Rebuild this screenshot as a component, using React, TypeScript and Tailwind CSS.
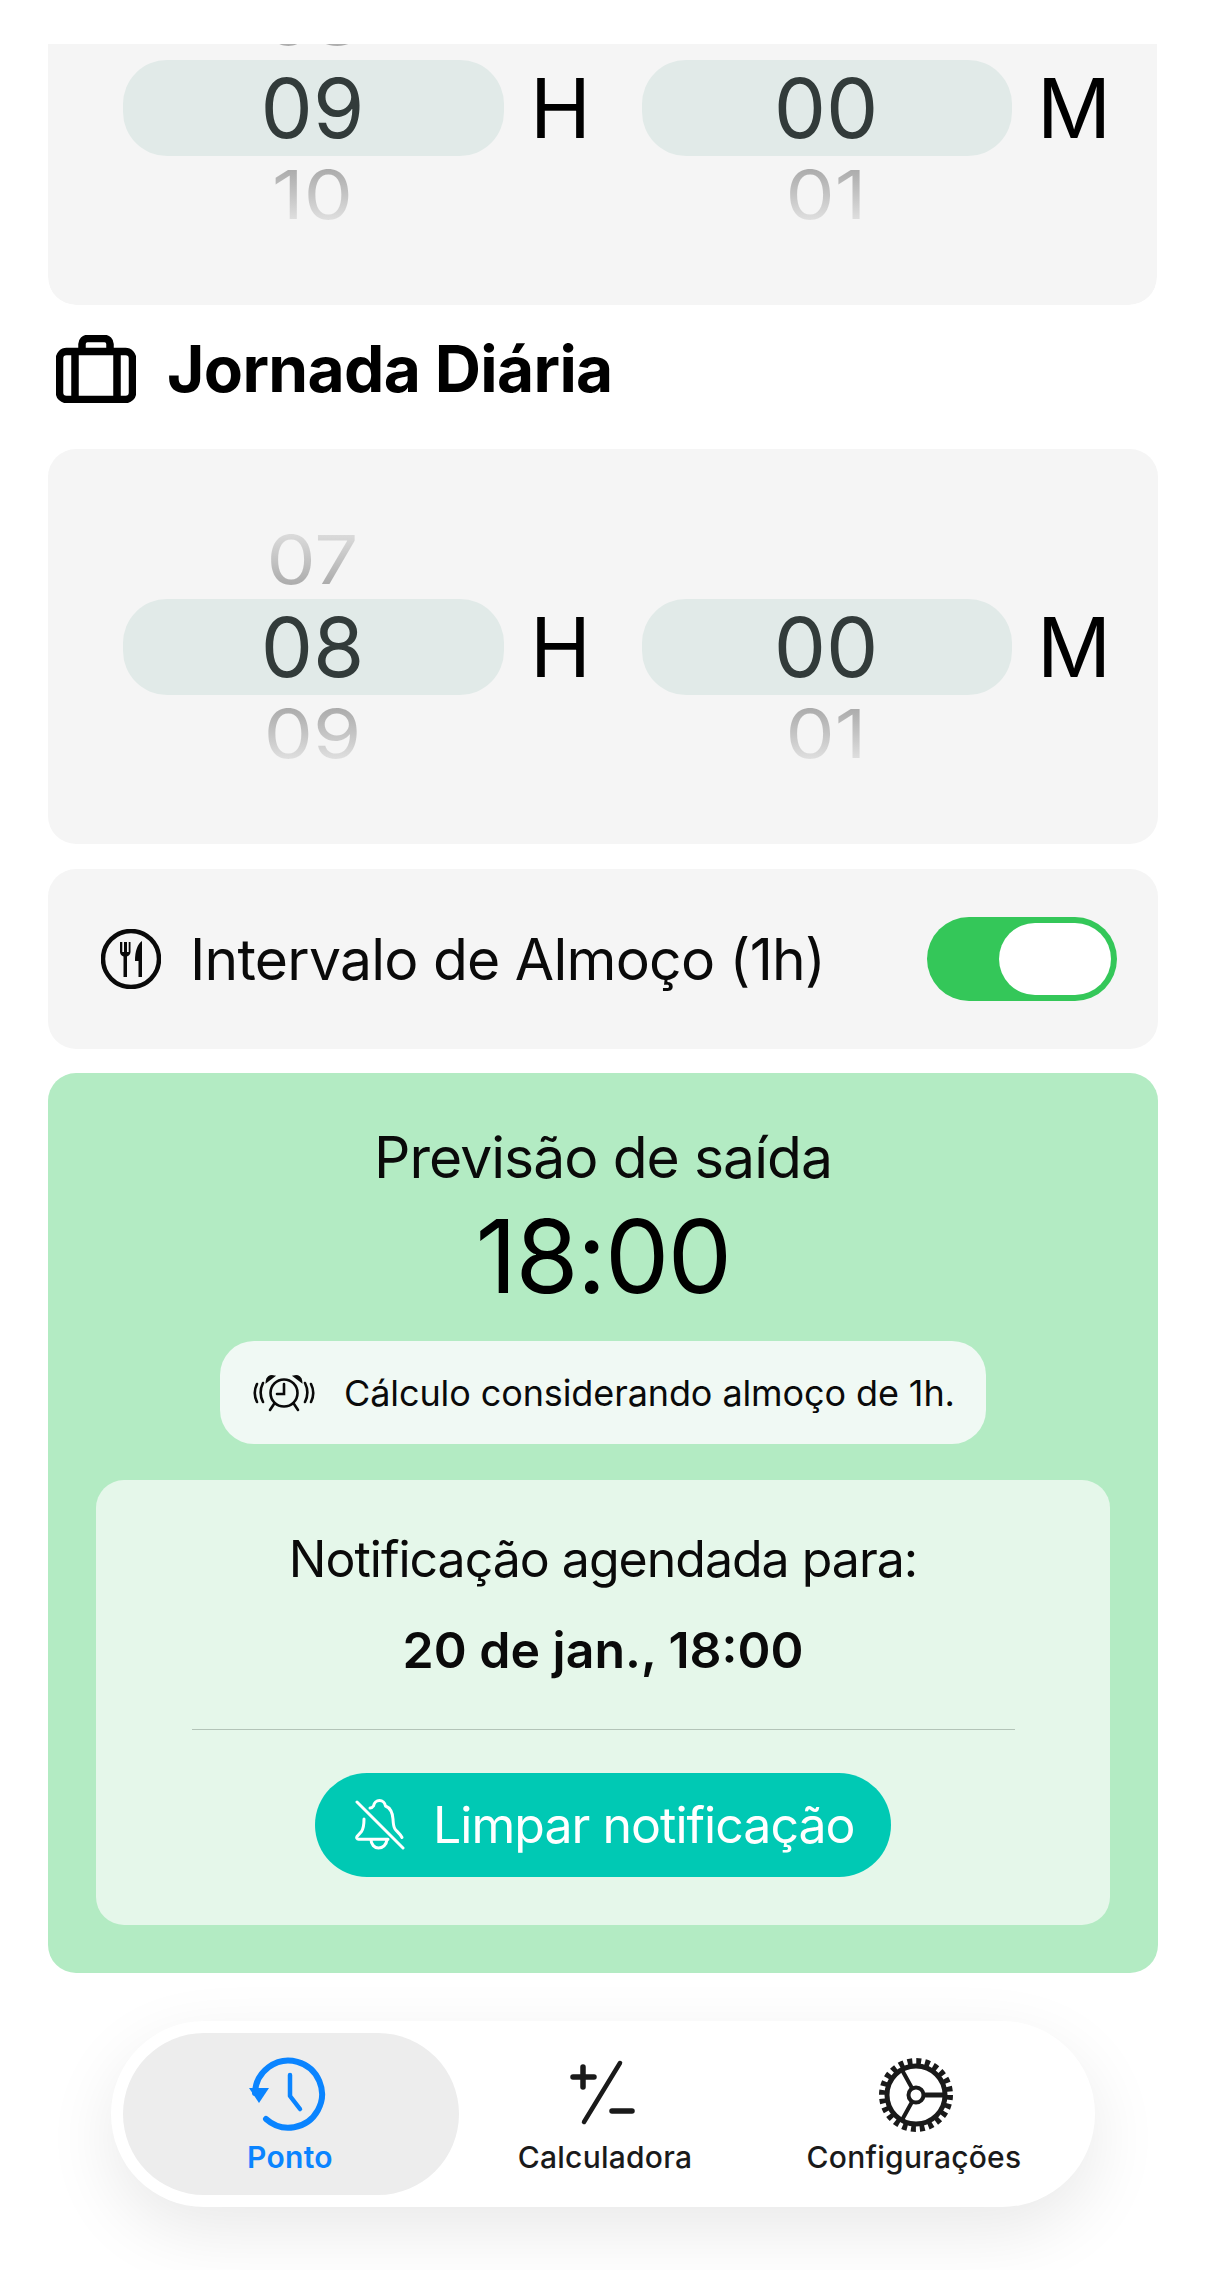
const font = { fontFamily: '"Inter", "Liberation Sans", sans-serif' };

function Wheel({ width, prev, value, next }: { width: string; prev?: string; value: string; next: string }) {
  return (
    <div className={`relative h-[261px] shrink-0 ${width}`}>
      <div className="absolute inset-x-0 top-[83px] h-[96px] rounded-[44px] bg-[#e1eae8]" />
      <div className="relative flex h-full flex-col items-center pr-[2px]">
        <div className="flex h-[87px] scale-y-[0.86] items-center bg-gradient-to-b from-[#e6e6e6] via-[#c4c4c4] to-[#a0a0a0] bg-clip-text text-[78px] leading-none text-transparent">{prev}</div>
        <div className="flex h-[87px] items-center pt-[2px] text-[83px] leading-none text-[#323b3a]">{value}</div>
        <div className="flex h-[87px] scale-y-[0.86] items-center bg-gradient-to-b from-[#a0a0a0] via-[#c4c4c4] to-[#ececec] bg-clip-text text-[78px] leading-none text-transparent">{next}</div>
      </div>
    </div>
  );
}

function PickerRow({ hourPrev, hour, hourNext }: { hourPrev: string; hour: string; hourNext: string }) {
  return (
    <div className="flex h-[395px] items-center rounded-[28px] bg-[#f5f5f5] pl-[75px]">
      <Wheel width="w-[381px]" prev={hourPrev} value={hour} next={hourNext} />
      <div className="w-[138px] shrink-0 pt-[2px] pl-[26px] text-[82px] leading-none text-black">H</div>
      <Wheel width="w-[370px]" value="00" next="01" />
      <div className="pt-[2px] pl-[25px] text-[82px] leading-none text-black">M</div>
    </div>
  );
}

function Briefcase() {
  return (
    <svg width="80" height="68" viewBox="0 0 80 68" fill="none" stroke="black" strokeWidth="7.5">
      <rect x="3.5" y="16.5" width="73" height="48" rx="7" />
      <path d="M26 16V9a5.5 5.5 0 0 1 5.5-5.5h17A5.5 5.5 0 0 1 54 9v7" />
      <path d="M19 17v47M61 17v47" />
    </svg>
  );
}

function Cutlery() {
  return (
    <svg width="60" height="60" viewBox="0 0 60 60" fill="none">
      <circle cx="30" cy="30" r="28" stroke="#0a0a0a" strokeWidth="4.5" />
      <path d="M19 13v10a5 5 0 0 0 3.500 4.500V48h3.500V27.500A5 5 0 0 0 29.500 23V13h-1.800v10h-1.700V13h-3v10h-1.700V13z" fill="#0a0a0a" />
      <path d="M41 12c-4.500 3-7 10-7 20H37.500v16H41z" fill="#0a0a0a" />
    </svg>
  );
}

function AlarmWaves() {
  return (
    <svg width="64" height="40" viewBox="0 0 64 40" fill="none" stroke="#0a0a0a" strokeWidth="2.6" strokeLinecap="round">
      <circle cx="32" cy="20" r="13.500" />
      <path d="M32 11v10h-7" />
      <path d="M21 3.500a5 5 0 0 0-6 4.500zM43 3.500a5 5 0 0 1 6 4.500z" fill="#0a0a0a" />
      <path d="M22 31l-4 6M42 31l4 6" />
      <path d="M11 10c-3 6-3 13 0 19M5 11c-3 6-3 12 0 18M53 10c3 6 3 13 0 19M59 11c3 6 3 12 0 18" />
    </svg>
  );
}

function BellOff() {
  return (
    <svg width="50" height="52" viewBox="0 0 50 52" fill="none" stroke="white" strokeWidth="3" strokeLinecap="round" strokeLinejoin="round">
      <path d="M2 3l46 46" />
      <path d="M15 9c1.500 0 2.500-.5 3.500-2 .5-3 3-5.500 6-5.500s5.500 2.500 6 5.500c5 2 7 6.500 7.500 13 .3 5 .3 7.500 2 10 1.500 2.200 5 4.500 7 8.500" />
      <path d="M9 20c0 7-.5 9.500-2.500 12.500L2 37.500c-.8 1.200 0 2.800 1.500 2.800H33" />
      <path d="M16 40.500c0 5 3.500 8.500 7.500 8.500s8-3 8.500-8.500" />
    </svg>
  );
}

function HistoryIcon() {
  return (
    <svg width="80" height="80" viewBox="0 0 80 80" fill="none" stroke="#0a84ff" strokeWidth="6" strokeLinecap="round" strokeLinejoin="round" className="-translate-x-[3px]">
      <path d="M7 38A33.500 33.500 0 1 1 18 64" />
      <polygon points="1,33 21,33 11,48" fill="#0a84ff" stroke="none" />
      <path d="M42 20v21l10 13" strokeWidth="4.500" />
    </svg>
  );
}

function PlusMinus() {
  return (
    <svg width="80" height="76" viewBox="0 0 80 76" fill="none" stroke="#1a1a1a" strokeWidth="5.500" strokeLinecap="round">
      <path d="M55 8 19 67" strokeWidth="4.500" />
      <path d="M8 22h21M18 12v20" />
      <path d="M47 56h20" />
    </svg>
  );
}

function Gear() {
  return (
    <svg width="80" height="80" viewBox="0 0 80 80" fill="none" stroke="#1a1a1a" className="translate-x-[2px]">
      <circle cx="40" cy="40" r="33" strokeWidth="8" strokeDasharray="4.800 3.840" />
      <circle cx="40" cy="40" r="29" strokeWidth="5" />
      <circle cx="40" cy="40" r="7.500" strokeWidth="4" />
      <path d="M47.500 40H68" strokeWidth="5" />
      <path d="M36.200 33.500 26 15M36.200 46.500 26 65" strokeWidth="4" />
    </svg>
  );
}

export default function App() {
  return (
    <div style={font} className="h-[2270px] w-[1206px] overflow-hidden bg-white px-[48px] pt-[44px]">
      <div className="h-[261px] w-[1109px] overflow-hidden rounded-b-[28px]">
        <div className="-mt-[134px]">
          <PickerRow hourPrev="08" hour="09" hourNext="10" />
        </div>
      </div>

      <div className="mt-[31px] mb-[47px] flex h-[66px] items-center pl-[8px]">
        <Briefcase />
        <h2 className="ml-[31px] text-[64px] leading-none font-bold tracking-[-0.01em] text-black">Jornada Diária</h2>
      </div>

      <PickerRow hourPrev="07" hour="08" hourNext="09" />

      <div className="mt-[25px] flex h-[180px] items-center justify-between rounded-[28px] bg-[#f5f5f5] pr-[41px] pl-[53px]">
        <div className="flex items-center gap-[29px]">
          <Cutlery />
          <span className="text-[57px] leading-none tracking-[-0.75px] text-[#0a0a0a]">Intervalo de Almoço (1h)</span>
        </div>
        <div className="flex h-[84px] w-[190px] justify-end rounded-[42px] bg-[#34c759] p-[6px]">
          <div className="h-[72px] w-[112px] rounded-[36px] bg-white" />
        </div>
      </div>

      <div className="mt-[24px] flex h-[900px] flex-col items-center rounded-[28px] bg-[#b3ebc3] px-[48px] pt-[52px]">
        <div className="text-[57px] leading-[66px] tracking-[-0.95px] text-[#0a0a0a]">Previsão de saída</div>
        <div className="mt-[5px] text-[102px] leading-[120px] font-normal tracking-[-1.5px] text-black">18:00</div>
        <div className="mt-[25px] flex h-[103px] w-[766px] items-center gap-[28px] rounded-[34px] bg-[#f0f9f4] pl-[32px]">
          <AlarmWaves />
          <span className="text-[36px] leading-none tracking-[-0.1px] text-[#0a0a0a]">Cálculo considerando almoço de 1h.</span>
        </div>
        <div className="mt-[36px] flex h-[445px] w-[1014px] flex-col items-center rounded-[28px] bg-[#e5f7ea] pt-[49px]">
          <div className="text-[50px] leading-[60px] tracking-[-1px] text-[#0a0a0a]">Notificação agendada para:</div>
          <div className="mt-[31px] text-[50px] leading-[60px] font-semibold text-[#0a0a0a]">20 de jan., 18:00</div>
          <div className="mt-[49px] h-[1px] w-[823px] bg-[#b3c4b8]" />
          <button className="mt-[43px] flex h-[104px] w-[576px] items-center gap-[28px] rounded-[52px] bg-[#00c9b4] pl-[40px] text-[50px] leading-none tracking-[-0.97px] text-white">
            <BellOff />
            <span>Limpar notificação</span>
          </button>
        </div>
      </div>

      <div className="-ml-[48px] mt-[48px] flex w-[1206px] justify-center">
        <div className="flex h-[186px] w-[984px] items-center rounded-[93px] bg-white p-[12px] shadow-[0_24px_70px_rgba(0,0,0,0.09)]">
          <div className="flex h-[162px] w-[336px] flex-col items-center justify-center rounded-[81px] bg-[#ededed]">
            <HistoryIcon />
            <span className="mt-[5px] -translate-x-[1px] text-[30px] leading-[34px] font-semibold tracking-[0.3px] text-[#0a84ff]">Ponto</span>
          </div>
          <div className="flex w-[292px] flex-col items-center">
            <PlusMinus />
            <span className="mt-[9px] text-[30px] leading-[34px] font-medium tracking-[0.25px] text-[#1a1a1a]">Calculadora</span>
          </div>
          <div className="flex flex-1 flex-col items-center pr-[6px]">
            <Gear />
            <span className="mt-[5px] text-[30px] leading-[34px] font-medium tracking-[0.25px] text-[#1a1a1a]">Configurações</span>
          </div>
        </div>
      </div>
    </div>
  );
}
